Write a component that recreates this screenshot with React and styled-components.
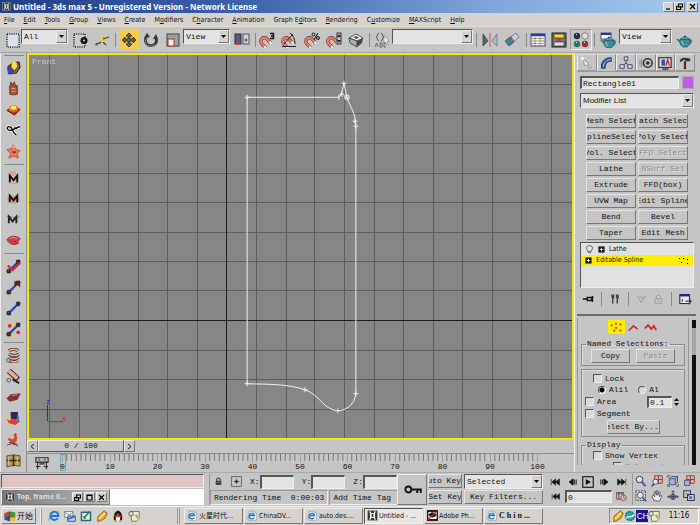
import React from "react";
import styled, { createGlobalStyle, css } from "styled-components";

const mono = '"Liberation Mono", "Noto Sans CJK SC", monospace';
const ui = '"DejaVu Sans Condensed", "Noto Sans", "Noto Sans CJK SC", sans-serif';
const face = "#c5c5c5";
const chrome = "#d6d3ce";

const Global = createGlobalStyle`
  * { box-sizing: border-box; }
  body { margin: 0; background: ${face}; color: #111; font: 8px/10px ${mono}; }
  button, input, select { font: inherit; color: inherit; margin: 0; padding: 0; border-radius: 0; }
  svg { display: block; flex: none; }
`;

const raised = css`
  border: 1px solid;
  border-color: #ededed #777 #777 #ededed;
`;
const sunken = css`
  border: 1px solid;
  border-color: #555 #eee #eee #555;
`;

const Shell = styled.div`
  display: flex;
  flex-direction: column;
  min-height: 100vh;
  overflow: hidden;
`;

/* Title and menu */
const TitleBar = styled.header`
  display: flex;
  align-items: center;
  gap: 2px;
  height: 13px;
  padding: 0 2px;
  background: linear-gradient(90deg, #1f3f88, #3c62ab 35%, #7fa5da 70%, #a8caef);
  color: #fff;
  font: bold 8px/12px "Noto Sans", sans-serif;
  h1 { flex: 1; margin: 0; font: inherit; white-space: nowrap; }
`;
const CaptionButtons = styled.div`
  display: flex;
  gap: ${(p) => p.$gap || 0}px;
`;
const CaptionButton = styled.button`
  ${raised}
  display: grid;
  place-items: center;
  width: 11px;
  height: 10px;
  background: ${chrome};
  color: #000;
`;
const MenuBar = styled.nav`
  display: flex;
  gap: 9px;
  height: 14px;
  padding: 0 4px;
  background: ${chrome};
  border-bottom: 1px solid #e5e0cc;
`;
const MenuItem = styled.button`
  border: 0;
  background: none;
  font: 7px/12px ${ui};
  white-space: nowrap;
  u { text-underline-offset: 1px; }
`;

/* Main toolbar */
const ToolBar = styled.div`
  display: flex;
  align-items: flex-start;
  height: 26px;
  padding: 2px 4px 0;
  border-bottom: 1px solid #a5a5a5;
`;
const ToolButton = styled.button`
  display: grid;
  place-items: center;
  flex: none;
  width: ${(p) => p.$w || 22}px;
  height: 21px;
  border: ${(p) => (p.$framed ? "1px solid" : "0")};
  border-color: #999 #eee #eee #999;
  background: ${(p) => (p.$active ? "#f8cb48" : "none")};
`;
const Sep = styled.span`
  flex: none;
  width: ${(p) => p.$w || 5}px;
  height: 14px;
  margin-top: ${(p) => p.$top || 0}px;
  background: linear-gradient(#888, #888) center / 1px 100% no-repeat;
`;
const SelectWrap = styled.span`
  ${sunken}
  display: grid;
  grid-template-columns: 1fr 11px;
  flex: ${(p) => (p.$w ? "none" : "auto")};
  width: ${(p) => (p.$w ? p.$w + "px" : "auto")};
  height: 15px;
  background: #e3e3e3;
`;
const SelectField = styled.select`
  grid-area: 1 / 1 / 2 / 3;
  appearance: none;
  min-width: 0;
  padding: 0 12px 0 2px;
  border: 0;
  background: none;
  font-family: ${(p) => (p.$ui ? '"Liberation Sans", sans-serif' : "inherit")};
`;
const Arrow = styled.span`
  ${raised}
  grid-area: 1 / 2;
  display: grid;
  place-items: center;
  background: ${chrome};
  pointer-events: none;
`;

/* Work area */
const Work = styled.main`
  display: flex;
  flex: 1;
  min-height: 0;
`;
const SideTools = styled.aside`
  display: flex;
  flex-direction: column;
  align-items: center;
  width: 27px;
  padding-top: 4px;
  border-right: 1px solid #8d8d8d;
  border-left: 1px solid #eee;
  background: linear-gradient(#888, #888) 3px 2px / 20px 1px no-repeat;
`;
const SideRule = styled.span`
  width: 20px;
  height: 5px;
  background: linear-gradient(#888, #888) center / 100% 1px no-repeat;
`;
const Stage = styled.section`
  display: flex;
  flex-direction: column;
  flex: 1;
  min-width: 0;
`;
const Viewport = styled.div`
  position: relative;
  flex: 1;
  min-height: 0;
  border: 2px solid #f4e813;
  background: #868686;
  svg { position: absolute; width: 100%; height: 100%; }
`;
const ViewLabel = styled.span`
  position: absolute;
  top: 2px;
  left: 3px;
  color: #cfcfcf;
`;
const SliderRow = styled.div`
  display: flex;
  height: 14px;
  border-bottom: 1px solid #8c8c8c;
  padding-bottom: 1px;
`;
const SliderStep = styled.button`
  ${raised}
  display: grid;
  place-items: center;
  width: 11px;
  background: ${face};
`;
const SliderThumb = styled.button`
  ${raised}
  border-color: #eee #555 #555 #eee;
  width: 86px;
  background: ${face};
`;
const TrackBar = styled.div`
  display: flex;
  height: 18px;
`;
const TrackTool = styled.button`
  display: grid;
  place-items: center;
  width: 30px;
  margin-right: 5px;
  border: 0;
  background: none;
`;
const Ruler = styled.div`
  display: flex;
  flex: 1;
  padding-right: 36px;
`;
const RulerPart = styled.div`
  flex: ${(p) => (p.$last ? "0 0 1px" : "1 1 0")};
  svg { width: 100%; height: 8px; }
`;
const RulerLabel = styled.span`
  display: flex;
  justify-content: center;
  width: 1px;
  white-space: nowrap;
`;
const FrameMark = styled.span`
  width: 6px;
  height: 17px;
  margin: 0 -4px 0 -2px;
  border: 1px solid #7fa3b5;
  background: #a9c6d299;
`;

/* Command panel */
const Panel = styled.aside`
  display: flex;
  flex-direction: column;
  width: 126px;
  padding: 1px 4px 4px 2px;
  border-left: 1px solid #eee;
`;
const Tabs = styled.div`
  display: grid;
  grid-template-columns: repeat(6, 1fr);
  height: 18px;
  margin-right: 1px;
  border-bottom: 1px solid #999;
`;
const Tab = styled.button`
  display: grid;
  place-items: center;
  border: 1px solid;
  border-color: #ddd #888 ${(p) => (p.$on ? "transparent" : "#999")} #eee;
  background: ${face};
`;
const PanelBody = styled.div`
  display: flex;
  flex-direction: column;
  padding: 4px 2px 0 3px;
`;
const NameRow = styled.div`
  display: flex;
  gap: 3px;
  margin-bottom: 4px;
`;
const Field = styled.input`
  ${sunken}
  flex: ${(p) => (p.$w ? "none" : "1")};
  width: ${(p) => (p.$w ? p.$w + "px" : "auto")};
  min-width: 0;
  height: ${(p) => p.$h || 13}px;
  padding: 0 1px;
  border-width: 2px 1px 1px 2px;
  background: #e3e3e3;
`;
const Swatch = styled.button`
  width: 12px;
  height: 13px;
  border: 1px solid #aaa;
  background: #c45be8;
`;
const ButtonGrid = styled.div`
  display: grid;
  grid-template-columns: 1fr 1fr;
  gap: 2px;
  padding: 6px 6px 2px;
`;
const PushButton = styled.button`
  border: 1px solid;
  border-color: #e4e4e4 #777 #777 #e4e4e4;
  display: flex;
  align-items: center;
  justify-content: ${(p) => (p.$end ? "flex-end" : "center")};
  width: ${(p) => (p.$w ? p.$w + "px" : "auto")};
  min-width: 0;
  height: 14px;
  overflow: hidden;
  background: ${face};
  white-space: nowrap;
  &:disabled { color: #8b8b8b; text-shadow: 1px 1px #e4e4e4; }
`;
const Stack = styled.ul`
  ${sunken}
  height: 46px;
  margin: 0;
  padding: 1px 0;
  list-style: none;
  background: #e1e1e1;
  font: 7px/11px ${ui};
`;
const StackRow = styled.li`
  display: flex;
  align-items: center;
  gap: 4px;
  height: 11px;
  padding: 0 4px;
  background: ${(p) => (p.$on ? "#fdee00" : "none")};
  span { flex: 1; }
`;
const StackTools = styled.div`
  display: flex;
  align-items: center;
  justify-content: space-between;
  height: 22px;
  padding: 0 2px;
`;
const Rollouts = styled.div`
  display: flex;
  flex: 1;
  min-height: 0;
  margin-top: 4px;
  border-top: 2px solid #6b6b6b;
`;
const RolloutBody = styled.div`
  flex: 1;
  min-width: 0;
  height: 147px;
  overflow: hidden;
  margin-top: 2px;
  padding: 2px 3px 0;
  border: solid #999;
  border-width: 0 1px;
`;
const ScrollRail = styled.div`
  width: 4px;
  margin: 4px 0 0 3px;
  height: 145px;
  background: linear-gradient(#111 0 8px, #a5a5a5 8px 35px, #111 35px);
`;
const SubLevels = styled.div`
  display: flex;
  justify-content: center;
  margin-bottom: 5px;
`;
const Group = styled.fieldset`
  min-width: 0;
  margin: 0 0 3px;
  padding: ${(p) => p.$pad || "0 3px 3px"};
  border: 1px solid #8c8c8c;
  box-shadow: inset 1px 1px #dcdcdc;
  legend { margin-left: 1px; padding: 0 1px; white-space: nowrap; }
`;
const Line = styled.div`
  display: flex;
  align-items: center;
  justify-content: ${(p) => (p.$center ? "center" : "flex-start")};
  gap: ${(p) => p.$gap || 0}px;
  height: ${(p) => p.$h || 11}px;
  padding-left: ${(p) => p.$indent || 0}px;
`;
const Check = styled.label`
  display: flex;
  align-items: center;
  gap: 3px;
  flex: ${(p) => (p.$grow ? 1 : "none")};
  white-space: nowrap;
  color: ${(p) => (p.$dim ? "#888" : "inherit")};
  input {
    ${sunken}
    appearance: none;
    width: 9px;
    height: 9px;
    background: #d8d8d8;
  }
  input[type="radio"] { width: 8px; height: 8px; border-radius: 50%; }
  input[type="radio"]:checked { background: radial-gradient(#000 0 2px, #ddd 3px); }
`;

/* Status area */
const Status = styled.section`
  display: flex;
  height: 34px;
  padding: 1px 3px 1px 1px;
  border-top: 1px solid #aaa;
`;
const Listener = styled.div`
  display: grid;
  grid-template-columns: minmax(0, 1fr);
  grid-template-rows: 14px 16px;
  gap: 1px;
  flex: none;
  width: 203px;
  margin-right: 5px;
`;
const Macro = styled.input`
  ${sunken}
  width: 100%;
  background: #dfc3c7;
`;
const ListenerRow = styled.div`
  display: flex;
`;
const MiniWindow = styled.div`
  ${raised}
  display: flex;
  align-items: center;
  gap: 2px;
  flex: none;
  width: 109px;
  padding: 0 2px 0 3px;
  background: linear-gradient(90deg, #777, #b9b9b9);
  color: #dedede;
  font: bold 7px/12px "Noto Sans", sans-serif;
  span { flex: 1; white-space: nowrap; }
`;
const ScriptInput = styled.input`
  flex: 1;
  min-width: 0;
  border: 0;
  background: #fff;
`;
const Coordinates = styled.div`
  display: flex;
  flex-direction: column;
  gap: 1px;
  flex: 1;
  min-width: 0;
  border-left: 1px solid #999;
`;
const CoordRow = styled.div`
  display: flex;
  align-items: center;
  gap: 8px;
  height: 15px;
  padding-left: 4px;
`;
const Coord = styled.label`
  display: flex;
  align-items: center;
  flex: 1;
  min-width: 0;
`;
const Prompt = styled.div`
  display: flex;
  gap: 1px;
  height: 15px;
`;
const PromptCell = styled.div`
  ${raised}
  border-color: #999 #eee #eee #999;
  flex: ${(p) => p.$grow};
  padding: 2px 3px;
  white-space: pre;
`;
const KeyButton = styled(ToolButton)`
  ${raised}
  width: 30px;
  height: 31px;
  margin-right: 1px;
`;
const KeyGrid = styled.div`
  display: grid;
  grid-template-columns: 34px 79px;
  grid-template-rows: 15px 15px;
  gap: 1px 2px;
  margin-right: 2px;
`;
const Playback = styled.div`
  display: grid;
  grid-template-columns: 20px 16px 14px 17px 19px;
  grid-template-rows: 15px 15px;
  align-items: center;
  justify-items: center;
`;
const FrameField = styled(Field)`
  grid-column: span 3;
  width: 100%;
`;
const NavGrid = styled.div`
  display: grid;
  grid-template-columns: repeat(4, 16px);
  grid-template-rows: 15px 15px;
  margin-left: 1px;
  border-left: 1px solid #999;
`;
const IconButton = styled.button`
  display: grid;
  place-items: center;
  width: ${(p) => (p.$w ? p.$w + "px" : "auto")};
  height: 14px;
  border: 0;
  background: ${(p) => (p.$on ? "#fdee00" : "none")};
`;

/* Desktop task bar */
const TaskBar = styled.footer`
  display: flex;
  align-items: center;
  height: 19px;
  padding: 1px 1px 2px;
  border-top: 1px solid #f4f2ee;
  background: ${chrome};
  font: 7px/12px ${ui};
`;
const StartButton = styled.button`
  ${raised}
  display: flex;
  align-items: center;
  gap: 1px;
  width: 35px;
  height: 16px;
  padding: 0 2px;
  background: ${chrome};
  font: 8px/12px "Noto Sans CJK SC", sans-serif;
  white-space: nowrap;
`;
const QuickLaunch = styled.div`
  display: flex;
  width: 137px;
  height: 14px;
  margin-left: 4px;
  padding-left: 4px;
  border-left: 2px ridge #eee;
`;
const Tasks = styled.div`
  display: grid;
  grid-template-columns: repeat(6, 59px);
  gap: 1px;
  flex: 1;
  padding-left: 4px;
  border-left: 3px double #999;
`;
const Task = styled.button`
  ${(p) => (p.$on ? sunken : raised)}
  display: flex;
  align-items: center;
  gap: 1px;
  height: 16px;
  padding: 0 2px;
  overflow: hidden;
  background: ${(p) => (p.$on ? "#e9e7e3" : chrome)};
  font-family: ${(p) => (p.$serif ? '"Liberation Serif", serif' : "inherit")};
  font-weight: ${(p) => (p.$serif ? "bold" : "normal")};
  font-size: ${(p) => (p.$serif ? "8px" : "7px")};
  white-space: pre;
`;
const Tray = styled.div`
  border: 1px solid;
  border-color: #888 #fff #fff #888;
  display: flex;
  align-items: center;
  width: 90px;
  height: 16px;
  padding-left: 2px;
  time { flex: 1; text-align: center; font-size: 8px; }
`;

/* Drawings */
const Svg = ({ w = 16, h = w, box = "0 0 16 16", children }) => (
  <svg width={w} height={h} viewBox={box} fill="none" aria-hidden="true">{children}</svg>
);
const Magnet = () => (
  <g transform="rotate(-42 6 10)">
    <path d="M2.500 15V9a3.500 3.500 0 0 1 7 0v6" stroke="#6d3a34" strokeWidth="3.400" />
    <path d="M2.500 15V9a3.500 3.500 0 0 1 7 0v6" stroke="#ec7d69" strokeWidth="2.200" />
    <path d="M2.500 13v2.500M9.500 13v2.500" stroke="#f3f3f3" strokeWidth="2.400" />
  </g>
);
const Teapot = ({ y = 0 }) => (
  <g transform={`translate(0 ${y})`}>
    <path d="M4 6c-1 3 0 6 3 8h4c3-2 4-5 3-8Z" fill="#3c8e98" stroke="#1c4d58" strokeWidth=".7" />
    <path d="M4 9 1 6M13 7c3-1 3 3 0 4" stroke="#2b6873" strokeWidth="1.4" />
    <path d="M5 6c1-3 7-3 8 0Z" fill="#69b5b9" stroke="#1c4d58" strokeWidth=".6" />
    <circle cx="9" cy="3.5" r="1" fill="#1c4d58" />
    <path d="M6 8c0 2 1 3 2 4" stroke="#b5e0df" />
  </g>
);
const Ie = () => (
  <>
    <path d="M3 2h8l3 3v10H3Z" fill="#fff" stroke="#777" strokeWidth=".7" />
    <path d="M10.500 11A4 4 0 1 1 11 8H4" stroke="#1c6fd0" strokeWidth="2" />
    <path d="M1 13C0 9 8 2 13 4" stroke="#51a4e8" />
  </>
);
const Bottle = ({ c = "#c98b72", line = "#6b2f22" }) => (
  <>
    <path d="M4 5h8v9c-2 1-6 1-8 0Z" fill={c} stroke={line} />
    <path d="M5 5V1l2 3 2-3 1 4" fill={c} stroke={line} />
  </>
);
const Bone = ({ head }) => (
  <>
    <path d="m4 12 8-8" stroke="#2540c9" strokeWidth="2.4" />
    <path d="m1 11 4 4M1 15l4-4M11 1l4 4M11 5l4-4M1 13l2-2 2 2-2 2ZM11 3l2-2 2 2-2 2Z" stroke="#2c2c22" strokeWidth="1.2" />
    {head}
  </>
);

const icons = {
  app: <><rect x="1" y="1" width="14" height="14" fill="#333" stroke="#999" /><path d="M3 3h2v10H3M13 3h-2v10h2M6 5h4v6H6Z" stroke="#eee" strokeWidth="1.500" /></>,
  region: <><rect x="2" y="2" width="12" height="13" fill="#dce0ea" stroke="#222" strokeWidth="1.600" strokeDasharray="1 1.200" /></>,
  regionDot: <><rect x="2" y="2" width="11" height="13" fill="#ccc" stroke="#222" strokeWidth="1.600" strokeDasharray="1 1.200" /><circle cx="12" cy="8.500" r="3.500" fill="#111" /><circle cx="12" cy="8.500" r="1" fill="#ddd" /></>,
  named: <><path d="m8 2 1 5 6-2M9 7l-3 4-4 1M8 9l4 4" stroke="#444" strokeWidth="1.300" /><path d="M7 2h3l-1 5 2 2-3 2-2-2 1-2Z" fill="#e8d044" /><circle cx="2.500" cy="12.500" r="1.300" fill="#3d7d48" /></>,
  move: <path d="M8 1 5 4h2v3H4V5L1 8l3 3V9h3v3H5l3 3 3-3H9V9h3v2l3-3-3-3v2H9V4h2Z" fill="#6b6450" stroke="#222" strokeWidth=".8" />,
  rotate: <><path d="M3.500 5A5.500 5.500 0 1 0 13 6" stroke="#333" strokeWidth="2.800" /><path d="M3.500 6A5 5 0 0 0 12 12" stroke="#888" /><path d="m1 6 3-5 3 4ZM10 7l3-5 2 5Z" fill="#333" /></>,
  scale: <><rect x="2" y="2" width="12" height="12" fill="#9c9ca2" stroke="#444" /><rect x="3" y="7" width="6" height="7" fill="#eee" stroke="#b03030" /></>,
  pivot: <><rect x="1" y="2" width="6" height="10" fill="#4a5f86" stroke="#333" /><rect x="9" y="2" width="6" height="10" fill="#ccd2e0" stroke="#456" /><circle cx="4" cy="11" r="2" fill="#c33" /><circle cx="12" cy="8" r="1.500" fill="#c33" /></>,
  snap: <><Magnet /><path d="M11 1.500h3.500v5H11M12 4h2" stroke="#111" strokeWidth="1.400" /></>,
  angle: <><Magnet /><path d="M1 14.500h14M3 12 12 2M9 1c3 2 5 6 5 11" stroke="#222" /></>,
  percent: <><Magnet /><circle cx="9.500" cy="2.500" r="1.500" stroke="#111" /><circle cx="14" cy="6" r="1.500" stroke="#111" /><path d="m10 8 4-7" stroke="#111" /></>,
  spin: <><Magnet /><rect x="11" y="1" width="4" height="11" fill="#ccc" stroke="#333" /><path d="m11 5 2-3 2 3M11 8l2 3 2-3" fill="#222" /></>,
  box: <><path d="m1 6 7-4 7 4-6 3Z" fill="#f4f4f4" stroke="#333" strokeWidth=".8" /><path d="m1 6 8 3v6l-7-4Z" fill="#aaa" stroke="#333" strokeWidth=".8" /><path d="m9 9 6-3-1 5-5 4Z" fill="#444" /><path d="m5 5 4-1 2 2-3 1Z" fill="#555" /></>,
  abc: <><path d="M5 1C3 1 4 5 2 5c2 0 1 4 3 4M7 1c2 0 1 4 3 4-2 0-1 4-3 4" stroke="#555" /><path d="m1 15 1.500-4L4 15M6 11v4h2v-4ZM12 11h-2v4h2" stroke="#555" strokeWidth=".8" /><path d="m10 3 5 6-2 .3 1 3-1.500.7-1-3L10 11Z" fill="#eee" stroke="#777" strokeWidth=".6" /></>,
  mirror: <><path d="M1 2v12l5-5Z" fill="#4d6d70" stroke="#333" strokeWidth=".7" /><path d="M15 2v12l-5-5Z" fill="#a8bcc4" stroke="#667" strokeWidth=".7" /><path d="M8 1v14" stroke="#d55" /></>,
  align: <><path d="m1 9 5-4 4 5-5 4Z" fill="#3f858c" stroke="#345" strokeWidth=".7" /><path d="m7 5 5-4 3 4-5 5Z" fill="#ccd" stroke="#556" strokeWidth=".7" /><path d="m6 4 5 6" stroke="#d55" /></>,
  layers: <><rect x="1" y="2" width="14" height="12" fill="#f5f5ee" stroke="#447" /><path d="M1 3h14" stroke="#2639a8" strokeWidth="2.500" /><path d="M2 6.500h12M2 9h12M2 11.500h12M5 5v9M10 5v9" stroke="#777" strokeWidth=".7" /><path d="M6 6.500h3M11 9h3M6 11.500h5" stroke="#c9b52b" strokeWidth="1.200" /></>,
  curve: <><rect x="1" y="1" width="14" height="14" fill="#777" stroke="#222" /><path d="M3 2h10v4H3Z" fill="#f4d335" stroke="#222" strokeWidth=".6" /><path d="M3 10h10v4H3Z" fill="#ddd" stroke="#222" strokeWidth=".6" /><path d="M8 6v4M6 8h4" stroke="#d22" strokeWidth="1.200" /></>,
  material: <><circle cx="4" cy="4" r="3.200" fill="#22304f" /><circle cx="12" cy="4" r="3.200" fill="#ddd" stroke="#555" strokeWidth=".6" /><circle cx="4" cy="12" r="3.200" fill="#237968" /><circle cx="12" cy="12" r="3.200" fill="#a5283a" /><path d="m3 3 1-1M11 3l1-1M3 11l1-1M11 11l1-1" stroke="#fff" /></>,
  render: <><rect x="1" y="1" width="10" height="6" fill="#f3f3f3" stroke="#335" strokeWidth=".8" /><path d="M1 2h10" stroke="#24349c" strokeWidth="2" /><Teapot y={2} /></>,
  teapot: <Teapot y={1} />,
  swirl: <><path d="M2 7 7 3l7-1 1 6-4 6-8 1Z" fill="#a82a24" stroke="#401818" /><path d="M1 8l6 1v6l-5-1Z" fill="#2848d0" /><path d="M6 3c3-3 7 0 6 4l-3 4-3-3Z" fill="#f3e44a" /><path d="M12 4c2 3 0 8-4 10" stroke="#2f9e4d" strokeWidth="1.500" /></>,
  bottle: <><Bottle c="#a8543c" /><path d="M6 8h4M6 11h4" stroke="#e0a58c" /></>,
  cushion: <><path d="m1 9 7-5 7 4-6 6Z" fill="#c32c22" stroke="#6a1710" /><ellipse cx="8" cy="7" rx="5" ry="3.500" fill="#e9802f" /><ellipse cx="8" cy="6" rx="3" ry="2" fill="#f2ec52" /><path d="M5 9c2 2 4 2 6-1" stroke="#3a9c3e" /></>,
  loop: <><path d="M15 4C11 4 8 8 4 8 0 7 1 3 4 4c4 1 1 5 7 9" stroke="#eee" strokeWidth="3.500" /><path d="M15 4C11 4 8 8 4 8 0 7 1 3 4 4c4 1 1 5 7 9M9 5l3 1" stroke="#111" strokeWidth="1.400" /></>,
  star: <><path d="m7 1 2 1 1 4 5 1-3 3 1 5-5-2-5 2 2-5-4-4 5-1Z" fill="#ee7a55" stroke="#a8402a" strokeWidth=".8" /><circle cx="8" cy="3" r="1.500" fill="#f6b598" /><path d="M6 8h5l-2 2Z" fill="#5b1d16" /></>,
  mBottle: <><Bottle c="#dcae9f" line="#c69a8c" /><path d="M4 13V6l4 5 4-5v7" stroke="#111" strokeWidth="2" /></>,
  mCushion: <><ellipse cx="8" cy="9" rx="7" ry="4.500" fill="#d79a94" /><path d="M4 12V5l4 5 4-5v7" stroke="#111" strokeWidth="2" /></>,
  mLoop: <><path d="M1 5c4-3 8 6 14-1" stroke="#777" /><path d="M3 12V5l4 5 4-5v7" stroke="#222" strokeWidth="2" /></>,
  lips: <><path d="M1 7c2-4 10-5 14-1 0 2-3 3-6 3l5 1c-3 4-11 3-13-3Z" fill="#cc3e42" stroke="#8a2028" strokeWidth=".7" /><path d="M4 6c3-2 6-1 8 0" stroke="#f09a98" /></>,
  boneX: <Bone head={<path d="m2 7 5 5 8-8" stroke="#e02424" strokeWidth="2.400" />} />,
  boneHammer: <Bone head={<path d="m9 1 6 1v6l-3-3-3 1Z" fill="#6b1820" />} />,
  bone: <Bone />,
  boneDots: <Bone head={<><circle cx="4" cy="4" r="2" fill="#d7262c" /><circle cx="8" cy="2" r="1.500" fill="#ecd32e" /><circle cx="13" cy="11" r="2" fill="#d7262c" /><circle cx="9" cy="14" r="1.500" fill="#ecd32e" /></>} />,
  spring: <><path d="M3 3c3-2 8-2 10 0M3 6.500c3 2 8 2 11 0M3 10c3 2 8 2 11 0M4 13.500c3 2 7 1 9 0" stroke="#4c2c20" strokeWidth="3.200" /><path d="M3 3c3-2 8-2 10 0M3 6.500c3 2 8 2 11 0M3 10c3 2 8 2 11 0M4 13.500c3 2 7 1 9 0" stroke="#e3b39e" strokeWidth="1.800" /><circle cx="2.500" cy="13" r="2" stroke="#475b3c" /></>,
  damper: <><path d="m3 2 10 9" stroke="#43291d" strokeWidth="6" /><path d="m3 2 9 8" stroke="#e5b197" strokeWidth="4" /><path d="m7 11 7 4" stroke="#222" strokeWidth="2" /><circle cx="3" cy="12" r="2" stroke="#475b3c" /></>,
  carpet: <><path d="m1 9 4-4 10-1-3 6-8 2Z" fill="#8f2d36" stroke="#5e1c24" strokeWidth=".7" /><path d="m6 6 6-1" stroke="#d68a88" /></>,
  hat: <><path d="M5 1h8l-1 8H5Z" fill="#342063" /><path d="M1 9c4-2 8-1 11 1l3 1-5 4-7-2Z" fill="#df3c32" /><path d="M2 6h3v4H2Z" fill="#eec63a" /><path d="M12 5h2v6h-2Z" fill="#497dd0" /></>,
  rooster: <><path d="M10 1 8 3l1 3-2 2-4-2-1 2 4 4 5-1 1-5-1-2 1-1Z" fill="#d8453c" /><path d="M8 11v3M1 14l6-2 6 3M3 11l9 2" stroke="#6a3a28" /></>,
  crate: <><path d="m1 3 7-1 7 1v11l-7-1-7 2Z" fill="#b5985c" stroke="#665128" /><path d="M8 2v12M1 8h14" stroke="#332913" strokeWidth="1.500" /><path d="M3 4v9M12 4v9" stroke="#e0cd98" /></>,
  create: <><path d="m4 3 9 10-3 1-1-4-4 1Z" fill="#f4f4ef" stroke="#666" strokeWidth=".7" /><path d="M3 1v4M1 3h4" stroke="#fff" strokeWidth="1.500" /></>,
  modify: <><path d="M3 14C2 7 6 2 14 2v4C9 6 7 9 7 14Z" fill="#31549f" stroke="#192c5b" /><path d="M5 13C5 7 9 4 14 4" stroke="#9bc1ef" strokeWidth="1.200" /></>,
  hierarchy: <><path d="M8 5v4M3 12l5-4 5 4" stroke="#446" /><path d="M6 1h4v4H6ZM1 10h5v4H1ZM10 10h5v4h-5Z" fill="#d9e4f0" stroke="#335" /></>,
  motion: <><circle cx="10" cy="8" r="5" fill="#bbb" stroke="#222" strokeWidth="1.600" /><circle cx="10" cy="8" r="2" fill="#333" /><path d="M1 5v6M3 3v10" stroke="#777" /></>,
  display: <><rect x="1" y="2" width="14" height="11" fill="#ddd" stroke="#222" strokeWidth="1.200" /><path d="M4 4h4v7H4Z" fill="#2f4fb2" /><path d="m9 11 2-7 2 7" stroke="#c22" strokeWidth="1.500" /><path d="M5 15h7" stroke="#333" strokeWidth="1.500" /></>,
  utility: <><path d="M2 5c3-4 7-3 12-2v3H9L7 4 3 7Z" fill="#333" /><path d="M8 6v9" stroke="#6a1b1b" strokeWidth="2.500" /></>,
  pin: <path d="M1 8h6M7 5v6M8 6h5v4H8M14 4v8" stroke="#111" strokeWidth="1.800" />,
  result: <path d="M4 2v3l2 1V2M5 6v8M10 2v3l2 1V2M11 6v8" stroke="#333" strokeWidth="1.700" />,
  unique: <path d="m2 4 5 9 6-9M5 4l3 4 3-4" stroke="#999" strokeWidth="1.200" />,
  trash: <path d="M5 7V4c0-3 6-3 6 0v3M3 7h10v7H3ZM8 9v3" stroke="#999" strokeWidth="1.200" />,
  configure: <><rect x="1" y="2" width="12" height="11" fill="#eee" stroke="#228" strokeWidth="1.300" /><path d="M1 3h12" stroke="#228" strokeWidth="2.500" /><path d="M8 10h6m-2-3 3 3-3 4M4 7v4" stroke="#345" strokeWidth="1.300" /></>,
  vertex: <path d="M2 5h2v2H2ZM7 8h2v2H7ZM12 4h2v2h-2ZM5 11h2v2H5ZM12 11h2v2h-2ZM7 3h2v2H7Z" fill="#d22" />,
  segment: <path d="m2 12 6-6 5 4" stroke="#d22" strokeWidth="2" />,
  spline: <path d="m1 9 4-4 4 5 3-4 3 5" stroke="#d22" strokeWidth="2.200" />,
  bulb: <><path d="M5 10C0 5 4 1 8 1s8 4 3 9v2H5ZM6 14h4" stroke="#333" strokeWidth="1.300" /></>,
  plus: <><rect x="1" y="1" width="14" height="14" fill="#111" /><path d="M8 4v8M4 8h8" stroke="#fff" strokeWidth="2" /></>,
  key: <path d="M2 8a2.500 2.500 0 1 0 5 0 2.500 2.500 0 0 0-5 0M7 8h8v3M12 8v3" stroke="#111" strokeWidth="1.600" />,
  lock: <><path d="M5 7V4c0-3 6-3 6 0v3" stroke="#333" strokeWidth="1.800" /><rect x="3" y="7" width="10" height="7" fill="#333" /><path d="M4 10h8" stroke="#aaa" /></>,
  absolute: <><rect x="1" y="1" width="14" height="14" stroke="#444" /><path d="M8 4v8M4 8h8" stroke="#333" /><circle cx="8" cy="8" r="2" fill="#222" /></>,
  track: <path d="M1 2h14v5H1ZM3 7v4M13 7v4M5 9h6M1 12h5M10 12h5M3 10v5M13 10v5M4 4l2 1M10 4l2 1" stroke="#222" strokeWidth="1.200" />,
  first: <path d="M2 3v10M9 3 3 8l6 5ZM15 3 9 8l6 5Z" fill="#111" stroke="#111" />,
  prev: <path d="m8 3-6 5 6 5ZM10 4v8M13 4v8" fill="#111" stroke="#111" strokeWidth="1.600" />,
  play: <><rect x="1" y="1" width="14" height="14" stroke="#111" strokeWidth="1.500" /><path d="m5 4 7 4-7 4Z" fill="#111" /></>,
  next: <path d="m8 3 6 5-6 5ZM3 4v8M6 4v8" fill="#111" stroke="#111" strokeWidth="1.600" />,
  last: <path d="M14 3v10M7 3l6 5-6 5ZM1 3l6 5-6 5Z" fill="#111" stroke="#111" />,
  timeConf: <><rect x="1" y="2" width="10" height="10" stroke="#444" /><path d="M1 4h10M4 2v10" stroke="#844" strokeWidth="1.500" /><circle cx="11" cy="10" r="4" fill="#ccc" stroke="#822" /><path d="M11 8v2h2" stroke="#822" /></>,
  zoom: <><circle cx="6" cy="6" r="4.300" fill="#dce7f5" stroke="#335" strokeWidth="1.300" /><path d="m9 9 5 6" stroke="#37549c" strokeWidth="2.500" /></>,
  zoomAll: <><path d="M5 1h10v10H5ZM10 1v10M5 6h10" stroke="#a33" strokeWidth="1.300" /><circle cx="6" cy="9" r="3.500" fill="#dce7f5" stroke="#335" /><path d="m4 12-3 3" stroke="#335" strokeWidth="2" /></>,
  extents: <><path d="M3 5h8v8H3ZM3 5l3-3h8v8l-3 3M11 5l3-3" fill="#a8b3d3" stroke="#346" /><path d="M1 4V1h3M12 15h3v-3M1 12v3h3" stroke="#333" /></>,
  extentsAll: <><path d="M5 1h10v10H5ZM10 1v10M5 6h10" stroke="#a33" strokeWidth="1.300" /><path d="M2 7h7v7H2Z" fill="#a8b3d3" stroke="#346" /></>,
  zoomRegion: <><rect x="1" y="1" width="13" height="13" stroke="#222" strokeDasharray="2 1.500" /><circle cx="7" cy="7" r="4" fill="#dce7f5" stroke="#335" /><path d="m10 10 5 5" stroke="#37549c" strokeWidth="2.200" /></>,
  pan: <path d="M4 14 1 8l2-1 2 2-1-6 2-1 1 5V1h2v6l2-5 1 1-1 6 3-2 1 1-4 7Z" fill="#eee" stroke="#333" strokeWidth=".9" />,
  orbit: <><circle cx="8" cy="9" r="3.500" fill="#8592b5" stroke="#335" /><path d="M1 9h14M8 1v12M6 3l2-2 2 2M3 7 1 9l2 2M13 7l2 2-2 2" stroke="#335" strokeWidth="1.200" /></>,
  minmax: <><rect x="1" y="1" width="9" height="9" stroke="#335" strokeWidth="1.300" /><rect x="6" y="6" width="9" height="8" fill="#bcc5dc" stroke="#335" strokeWidth="1.300" /><path d="m4 4 7 7M8 11h3V8" stroke="#335" /></>,
  windows: <><path d="m1 4 6-2v6L1 9Z" fill="#d43b24" /><path d="m8 2 7 1v5H8Z" fill="#3c9c3a" /><path d="m1 10 6-1v6l-6-2Z" fill="#234bb5" /><path d="M8 9h7v6l-7-1Z" fill="#e7c42c" /><path d="M0 4v9M7.500 2v13M1 9h14" stroke="#222" /></>,
  ie: <Ie />,
  ieBig: <><path d="M13 11A5.500 5.500 0 1 1 14 8H4" stroke="#1c6fd0" strokeWidth="2.600" /><path d="M1 14C0 9 9 0 15 3" stroke="#51a4e8" strokeWidth="1.300" /></>,
  mail: <><path d="M1 2h11v8H1Z" fill="#f6f4e8" stroke="#47a" /><path d="m1 3 6 4 5-4" stroke="#47a" /><path d="M5 8h10v7H5Z" fill="#b9d4f5" stroke="#226" /><path d="m5 12 9-3" stroke="#2a62c8" strokeWidth="2" /></>,
  desktop: <><path d="M2 3h12v11H2Z" fill="#f5efd2" stroke="#268" strokeWidth="2" /><path d="m5 11 8-9M5 8l2 4" stroke="#297a42" strokeWidth="2" /></>,
  flash: <><path d="m2 15 1-7 8-7 4 3-3 7-7 4Z" fill="#f1a523" stroke="#735016" /><path d="m4 12 8-8" stroke="#fff4a5" strokeWidth="2" /></>,
  penguin: <><path d="M3 14C1 8 4 1 8 1s7 7 5 13Z" fill="#111" /><ellipse cx="8" cy="11" rx="3" ry="4" fill="#fff" /><path d="M3 8h10" stroke="#d32222" strokeWidth="2.300" /><path d="M6 5h4l-2 2Z" fill="#eea72b" /><path d="M3 15h4M9 15h4" stroke="#eea72b" strokeWidth="2" /></>,
  note: <><path d="M3 2h12v9l-4 4H5Z" fill="#edf0c5" stroke="#575c35" /><circle cx="4" cy="5" r="3" fill="#ddd" stroke="#454" /><path d="m8 6 4 4M12 6v5" stroke="#4a6c2c" /></>,
  photoshop: <><rect width="16" height="16" fill="#451316" /><path d="M2 3h12v10H2Z" fill="#fff" /><path d="M2 7c3-5 9-5 12 0-3 5-9 5-12 0Z" fill="#222" /><path d="M1 14 14 2" stroke="#c22" strokeWidth="1.500" /></>,
  gear: <><circle cx="8" cy="8" r="6" fill="#35a3a8" stroke="#176b79" strokeDasharray="2 1" strokeWidth="2" /><path d="M3 11c3-5 7 1 11-5" stroke="#e8f7f4" strokeWidth="2" /></>,
};
const Icon = ({ name, size, h }) => <Svg w={size || 16} h={h || size || 16}>{icons[name]}</Svg>;

const Glyph = ({ type }) => (
  <Svg w={7} box="0 0 7 7">
    <g stroke="#000" strokeWidth="1.200">
      {type === "min" && <path d="M1 6h4" />}
      {type === "restore" && <path d="M2.500 1h4v3h-4ZM.6 3.500h4v3h-4Z" />}
      {type === "max" && <path d="M1 1h5v5H1ZM1 1.500h5" />}
      {type === "close" && <path d="m1 1 5 5M6 1 1 6" />}
    </g>
  </Svg>
);
const Triangle = () => <Svg w={5} h={3} box="0 0 5 3"><path d="M0 0h5L2.500 3Z" fill="#000" /></Svg>;

const Select = ({ value, label, w, ui: sans }) => (
  <SelectWrap $w={w}>
    <SelectField aria-label={label} defaultValue={value} $ui={sans}><option>{value}</option></SelectField>
    <Arrow><Triangle /></Arrow>
  </SelectWrap>
);

const menus = [
  ["", "F", "ile"], ["", "E", "dit"], ["", "T", "ools"], ["", "G", "roup"], ["", "V", "iews"], ["", "C", "reate"],
  ["M", "o", "difiers"], ["C", "h", "aracter"], ["", "A", "nimation"], ["Graph E", "d", "itors"], ["", "R", "endering"],
  ["C", "u", "stomize"], ["", "M", "AXScript"], ["", "H", "elp"],
];
const toolbar = [
  ["region", 17], { label: "Selection filter", value: "All", w: 47 }, ["regionDot", 24], ["named", 20], 7,
  ["move", 20, "active"], ["rotate", 24], ["scale", 20], { label: "Coordinate system", value: "View", w: 47 },
  ["pivot", 24], 3, ["snap", 20], ["angle", 24], ["percent", 22], ["spin", 22], ["box", 22], 5, ["abc", 20],
  { label: "Named selection sets", value: "", w: 81 }, 7, ["mirror", 20], ["align", 24], 4, ["layers", 20],
  ["curve", 22], ["material", 22, "framed"], 5, ["render", 22], { label: "Render type", value: "View", w: 53 }, ["teapot", 24],
];
const sideGroups = [
  ["swirl", "bottle", "cushion", "loop", "star"],
  ["mBottle", "mCushion", "mLoop", "lips"],
  ["boneX", "boneHammer", "bone", "boneDots"],
  ["spring", "damper", "carpet", "hat", "rooster", "crate"],
];
const modifiers = [
  "Mesh Select", "Patch Select", "SplineSelect", "Poly Select", "Vol. Select", "FFD Select", "Lathe", "NSurf Sel",
  "Extrude", "FFD(box)", "UVW Map", "Edit Spline", "Bend", "Bevel", "Taper", "Edit Mesh",
];
const tasks = [["ie", "火星时代..."], ["ie", "ChinaDV..."], ["ie", "auto.des...."], ["app", "Untitled - ..."], ["photoshop", "Adobe Ph..."], ["ie", "C h i n ..."]];
const verticals = [49, 79, 108, 138, 167, 197, 256, 286, 315, 345, 375, 404, 434, 463, 493, 522, 552];
const horizontals = [84, 113, 143, 173, 202, 232, 262, 291, 351, 380, 410];
const vertices = [[247, 97], [344, 83], [342, 94], [355, 121], [356, 126], [356, 394], [338, 411], [305, 390], [247, 384]];

const Scene = () => (
  <svg viewBox="29 55 544 384" preserveAspectRatio="xMidYMid slice" fill="none" role="img" aria-label="Front view">
    <g stroke="#5d5d5d" shapeRendering="crispEdges">
      {verticals.map((x) => <path key={x} d={`M${x}.500 0v600`} />)}
      {horizontals.map((y) => <path key={y} d={`M0 ${y}.500h700`} />)}
      <path d="M226.500 0v600M0 321.500h700" stroke="#1c1c1c" />
    </g>
    <path d="M339.500 97.500H247.500V384.500C270 385 290 385 305.500 390.500S323 410 338.500 411.500C350 411 356 402 356.500 394V126.500C356 112 351 108 347.500 98L344.500 83.500 342 94 339.500 97.500" stroke="#f2f2f2" />
    <g stroke="#f2f2f2">
      {vertices.map(([x, y]) => <path key={x + "," + y} d={`M${x - 2} ${y + 0.5}h5M${x + 0.5} ${y - 2}v5`} />)}
      <path d="M345.500 95.500h4v4h-4ZM345.500 97.500h4M339.500 95v5" />
    </g>
    <path d="M47.500 406v16" stroke="#2020c8" />
    <path d="M47 422.500h16" stroke="#d02020" />
    <path d="M47 419h3v3h-3" stroke="#20a040" />
    <text x="46" y="405" fill="#2020c8" fontSize="7">z</text>
    <text x="62" y="422" fill="#d02020" fontSize="7">x</text>
  </svg>
);

export default function App() {
  return (
    <Shell>
      <Global />
      <TitleBar>
        <Icon name="app" size={9} />
        <h1>Untitled - 3ds max 5 - Unregistered Version - Network License</h1>
        <CaptionButtons>
          <CaptionButton aria-label="Minimize"><Glyph type="min" /></CaptionButton>
          <CaptionButton aria-label="Restore"><Glyph type="restore" /></CaptionButton>
        </CaptionButtons>
        <CaptionButton aria-label="Close"><Glyph type="close" /></CaptionButton>
      </TitleBar>
      <MenuBar>
        {menus.map(([a, b, c]) => <MenuItem key={a + b + c}>{a}<u>{b}</u>{c}</MenuItem>)}
      </MenuBar>
      <ToolBar>
        {toolbar.map((t, i) => {
          if (typeof t === "number") return <Sep key={i} $w={t} $top={4} />;
          if (!Array.isArray(t)) return <Select key={i} {...t} />;
          return (
            <ToolButton key={i} aria-label={t[0]} $w={t[1]} $active={t[2] === "active"} $framed={t[2] === "framed"}>
              <Icon name={t[0]} />
            </ToolButton>
          );
        })}
      </ToolBar>

      <Work>
        <SideTools>
          {sideGroups.map((group, i) => (
            <React.Fragment key={i}>
              {i > 0 && <SideRule />}
              {group.map((n) => <ToolButton key={n} aria-label={n}><Icon name={n} size={15} /></ToolButton>)}
            </React.Fragment>
          ))}
        </SideTools>

        <Stage>
          <Viewport><Scene /><ViewLabel>Front</ViewLabel></Viewport>
          <SliderRow>
            <SliderStep aria-label="Previous frame"><Svg w={5} box="0 0 5 5"><path d="M4 0 1 2.500 4 5" stroke="#222" /></Svg></SliderStep>
            <SliderThumb>0 / 100</SliderThumb>
            <SliderStep aria-label="Next frame"><Svg w={5} box="0 0 5 5"><path d="m1 0 3 2.500L1 5" stroke="#222" /></Svg></SliderStep>
          </SliderRow>
          <TrackBar>
            <TrackTool aria-label="Open mini curve editor"><Icon name="track" size={14} /></TrackTool>
            <Ruler>
              <FrameMark />
              {[0, 10, 20, 30, 40, 50, 60, 70, 80, 90, 100].map((n) => (
                <RulerPart key={n} $last={n === 100}>
                  <svg viewBox={n === 100 ? "0 0 1 8" : "0 0 100 8"} preserveAspectRatio="none" aria-hidden="true">
                    {(n === 100 ? [0] : [0, 10, 20, 30, 40, 50, 60, 70, 80, 90]).map((x) => (
                      <path key={x} d={`M${x} 0v${x ? 7 : 8}`} stroke="#777" vectorEffect="non-scaling-stroke" />
                    ))}
                  </svg>
                  <RulerLabel>{n}</RulerLabel>
                </RulerPart>
              ))}
            </Ruler>
          </TrackBar>
        </Stage>

        <Panel>
          <Tabs>
            {["create", "modify", "hierarchy", "motion", "display", "utility"].map((n) => (
              <Tab key={n} aria-label={n} $on={n === "modify"}><Icon name={n} size={14} /></Tab>
            ))}
          </Tabs>
          <PanelBody>
            <NameRow>
              <Field aria-label="Object name" defaultValue="Rectangle01" />
              <Swatch aria-label="Object color" />
            </NameRow>
            <Select label="Modifier list" value="Modifier List" ui />
            <ButtonGrid>
              {modifiers.map((m) => <PushButton key={m} disabled={m === "FFD Select" || m === "NSurf Sel"}>{m}</PushButton>)}
            </ButtonGrid>
            <Stack>
              <StackRow><Icon name="bulb" size={9} /><Icon name="plus" size={7} /><span>Lathe</span></StackRow>
              <StackRow $on>
                <Icon name="plus" size={7} /><span>Editable Spline</span>
                <Svg w={11} h={8} box="0 0 11 8"><path d="M1 1h1v1H1ZM5 1h1v1H5ZM9 2h1v1H9ZM3 5h1v1H3ZM9 6h1v1H9Z" fill="#111" /></Svg>
              </StackRow>
            </Stack>
            <StackTools>
              <IconButton aria-label="Pin stack"><Icon name="pin" size={12} /></IconButton><Sep />
              <IconButton aria-label="Show end result"><Icon name="result" size={12} /></IconButton><Sep />
              <IconButton aria-label="Make unique"><Icon name="unique" size={12} /></IconButton>
              <IconButton aria-label="Remove modifier"><Icon name="trash" size={11} /></IconButton><Sep />
              <IconButton aria-label="Configure sets"><Icon name="configure" size={13} /></IconButton>
            </StackTools>
          </PanelBody>
          <Rollouts>
            <RolloutBody>
              <SubLevels>
                <IconButton $w={17} $on aria-label="Vertex"><Icon name="vertex" size={14} /></IconButton>
                <IconButton $w={17} aria-label="Segment"><Icon name="segment" size={13} /></IconButton>
                <IconButton $w={17} aria-label="Spline"><Icon name="spline" size={13} /></IconButton>
              </SubLevels>
              <Group>
                <legend>Named Selections:</legend>
                <Line $center $gap={6} $h={13}>
                  <PushButton $w={39}>Copy</PushButton>
                  <PushButton $w={39} disabled>Paste</PushButton>
                </Line>
              </Group>
              <Group $pad="3px 3px 2px">
                <Line $indent={8}><Check><input type="checkbox" />Lock</Check></Line>
                <Line $indent={13} $gap={10}>
                  <Check><input type="radio" name="handles" defaultChecked />Alil</Check>
                  <Check><input type="radio" name="handles" />Al</Check>
                </Line>
                <Line $h={13}>
                  <Check $grow><input type="checkbox" />Area</Check>
                  <Field $w={25} $h={12} aria-label="Area threshold" defaultValue="0.1" />
                  <IconButton $w={9} aria-label="Adjust threshold"><Svg w={7} h={10} box="0 0 7 10"><path d="m1 4 2.500-3L6 4ZM1 6l2.500 3L6 6Z" fill="#111" /></Svg></IconButton>
                </Line>
                <Line><Check><input type="checkbox" />Segment</Check></Line>
                <Line $center $h={15}><PushButton $w={53} $end>Select By...</PushButton></Line>
              </Group>
              <Group>
                <legend>Display</legend>
                <Line $indent={8}><Check><input type="checkbox" />Show Vertex</Check></Line>
                <Line $indent={28}><Check $dim><input type="checkbox" />Selected</Check></Line>
              </Group>
            </RolloutBody>
            <ScrollRail />
          </Rollouts>
        </Panel>
      </Work>

      <Status>
        <Listener>
          <Macro aria-label="Macro recorder" />
          <ListenerRow>
            <MiniWindow>
              <Icon name="app" size={10} /><span>Top, frame 0...</span>
              <CaptionButtons $gap={1}>
                <CaptionButton aria-label="Restore view"><Glyph type="restore" /></CaptionButton>
                <CaptionButton aria-label="Maximize view"><Glyph type="max" /></CaptionButton>
                <CaptionButton aria-label="Close view"><Glyph type="close" /></CaptionButton>
              </CaptionButtons>
            </MiniWindow>
            <ScriptInput aria-label="Script listener" />
          </ListenerRow>
        </Listener>
        <Coordinates>
          <CoordRow>
            <IconButton aria-label="Lock selection"><Icon name="lock" size={9} /></IconButton>
            <IconButton aria-label="Absolute mode"><Icon name="absolute" size={11} /></IconButton>
            {["X:", "Y:", "Z:"].map((c) => <Coord key={c}>{c}<Field $h={14} /></Coord>)}
          </CoordRow>
          <Prompt>
            <PromptCell $grow="1">Rendering Time  0:00:03</PromptCell>
            <PromptCell $grow="0 0 69px">Add Time Tag</PromptCell>
          </Prompt>
        </Coordinates>
        <KeyButton aria-label="Set keys"><Icon name="key" size={19} /></KeyButton>
        <KeyGrid>
          <PushButton $end>Auto Key</PushButton>
          <Select label="Key set" value="Selected" />
          <PushButton>Set Key</PushButton>
          <PushButton>Key Filters...</PushButton>
        </KeyGrid>
        <Playback>
          {["first", "prev", "play", "next", "last"].map((n) => <IconButton key={n} aria-label={n}><Icon name={n} size={12} h={n === "play" ? 12 : 10} /></IconButton>)}
          <IconButton aria-label="Key mode"><Icon name="first" size={9} /></IconButton>
          <FrameField aria-label="Current frame" defaultValue="0" />
          <IconButton aria-label="Time configuration"><Icon name="timeConf" size={11} /></IconButton>
        </Playback>
        <NavGrid>
          {["zoom", "zoomAll", "extents", "extentsAll", "zoomRegion", "pan", "orbit", "minmax"].map((n) => (
            <IconButton key={n} aria-label={n}><Icon name={n} size={12} /></IconButton>
          ))}
        </NavGrid>
      </Status>

      <TaskBar>
        <StartButton><Icon name="windows" size={12} />开始</StartButton>
        <QuickLaunch>
          {["ieBig", "mail", "desktop", "flash", "penguin", "note"].map((n) => <IconButton key={n} $w={16} aria-label={n}><Icon name={n} size={12} /></IconButton>)}
        </QuickLaunch>
        <Tasks>
          {tasks.map(([icon, text], i) => <Task key={text} $on={icon === "app"} $serif={i === 5}><Icon name={icon} size={11} />{text}</Task>)}
        </Tasks>
        <Tray>
          <Icon name="flash" size={12} /><Icon name="gear" size={12} />
          <Svg w={12}><rect width="16" height="16" fill="#14148c" /><text x="1" y="12" fill="#fff" fontSize="11" fontFamily="Liberation Sans">CH</text></Svg>
          <Icon name="note" size={12} />
          <time>11:16</time>
        </Tray>
      </TaskBar>
    </Shell>
  );
}
